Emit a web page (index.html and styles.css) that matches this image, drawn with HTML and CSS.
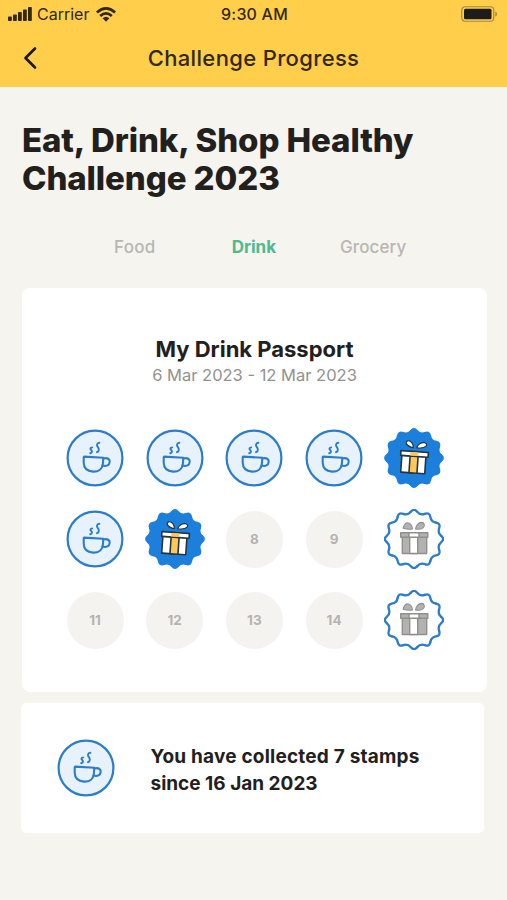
FILE: index.html
```html
<!DOCTYPE html>
<html lang="en">
<head>
<meta charset="utf-8">
<title>Challenge Progress</title>
<link rel="stylesheet" href="styles.css">
</head>
<body>
<svg class="sprite" aria-hidden="true">
  <defs>
    <symbol id="cup" viewBox="0 0 60 60">
      <circle cx="30" cy="30" r="27.400" fill="#e7f2fd" stroke="#2b7dcb" stroke-width="2.200"/>
      <g fill="none" stroke="#2b7dcb" stroke-width="2.100" stroke-linecap="round" stroke-linejoin="round">
        <path d="M19.200 28.600L38.300 29.700L37.900 35.500C37.300 41.500 33 43.900 28 43.600C22 43.200 18.800 39.500 18.700 34.500L18.700 29.200Q18.700 28.600 19.200 28.600Z"/>
        <path d="M38.300 30.500C42.500 29.300 45 31.200 44.700 34C44.400 37.200 41.500 38.700 37.600 37.600"/>
        <path stroke-width="1.900" d="M27.200 19.400C24.700 19.800 25.300 21.200 26.300 22.200C27.300 23.400 27.200 24.900 25.200 25.300M34.400 14.800C31.200 15 31.700 17.700 32.900 19.200C34.300 21 34.200 23.800 31.900 24.200"/>
      </g>
    </symbol>
    <path id="wave" d="M-3.150-27.240Q0-31 3.150-27.240Q6.290-23.470 10.890-25.170"/>
    <path id="wedge" d="M-3.150-27.240Q0-31 3.150-27.240Q6.290-23.470 10.890-25.170L0 0Z"/>
    <g id="waves3"><use href="#wave"/><use href="#wave" transform="rotate(30)"/><use href="#wave" transform="rotate(60)"/></g>
    <g id="waves"><use href="#waves3"/><use href="#waves3" transform="rotate(90)"/><use href="#waves3" transform="rotate(180)"/><use href="#waves3" transform="rotate(270)"/></g>
    <g id="wedges3"><use href="#wedge"/><use href="#wedge" transform="rotate(30)"/><use href="#wedge" transform="rotate(60)"/></g>
    <g id="wedges"><use href="#wedges3"/><use href="#wedges3" transform="rotate(90)"/><use href="#wedges3" transform="rotate(180)"/><use href="#wedges3" transform="rotate(270)"/></g>
    <symbol id="gift-on" viewBox="0 0 60 60">
      <g transform="translate(30 30)" fill="#1c7fdc" stroke="#1c7fdc" stroke-width="1.600" stroke-linejoin="round"><use href="#wedges"/></g>
      <g transform="rotate(4 30 30)" stroke="#24343f" stroke-width="1.600" stroke-linejoin="round">
        <path fill="#fff" d="M17.700 28H41.800V45H17.700Z"/>
        <path fill="#fdc858" d="M26 28H34V45H26Z"/>
        <path fill="#fff" d="M16.500 23.500H44V28.300H16.500Z"/>
        <path fill="#fdc858" stroke="none" d="M26 24.200H34V27.800H26Z"/>
        <path fill="#fff" stroke-width="1.200" d="M28.600 19.800C28.800 16 25.500 12.500 22.600 13.300C19.800 14.200 20.600 18.600 28.600 19.800ZM32 19.600C32.700 16.500 36 13.600 39.600 14C43.500 14.700 42.500 20.300 32 19.600Z"/>
      </g>
    </symbol>
    <symbol id="gift-off" viewBox="0 0 60 60">
      <g transform="translate(30 30)" fill="none" stroke="#2b7dcb" stroke-width="2.300" stroke-linecap="round"><use href="#waves"/></g>
      <g stroke="#8f8f8f" stroke-width="1.400" stroke-linejoin="round" fill="#b3b2b0">
        <path d="M18.300 28H42.700V44.500H18.300Z"/>
        <path fill="#fff" d="M25.700 28H33.700V44.500H25.700Z"/>
        <path d="M16.700 23.700H43.800V28.200H16.700Z"/>
        <path fill="#fff" d="M25 23.700H35V28.200H25Z"/>
        <path stroke-width="1.100" d="M28.500 20C28.500 16 25 13 22.500 14C20.500 15 19.500 17.500 19.200 19.300Q24 20.800 28.500 20ZM31.500 20C32 16.500 34.500 13.500 37.500 13.400C40.500 13.500 41 16.500 39.500 18.500C38 20.300 35 20.500 31.500 20Z"/>
      </g>
    </symbol>
  </defs>
</svg>
<header class="header">
  <div class="status">
    <div class="carrier">
      <svg class="signal" viewBox="0 0 24 14"><rect y="9.500" width="3.800" height="4.500" rx=".8"/><rect x="5" y="7.500" width="3.800" height="6.500" rx=".8"/><rect x="10" y="5" width="3.800" height="9" rx=".8"/><rect x="15" y="2.500" width="3.800" height="11.500" rx=".8"/><rect x="20" width="3.800" height="14" rx=".8"/></svg>
      <span>Carrier</span>
      <svg class="wifi" viewBox="0 0 20 15"><g fill="none" stroke="#30280f" stroke-width="2.700"><path d="M.900 5.500Q10-2.600 19.100 5.500"/><path d="M4.200 9Q10 3.900 15.800 9"/></g><path d="M6.600 11.300Q10 8.300 13.400 11.300L10 14.800Z" fill="#30280f"/></svg>
    </div>
    <span class="time">9:30 AM</span>
    <svg class="battery" viewBox="0 0 37 16"><rect x=".75" y=".75" width="32" height="14.500" rx="3.500" fill="none" stroke="#a68b3d" stroke-width="1.200"/><rect x="3" y="2.800" width="27.500" height="10.400" rx="1.500" fill="#1d1c1a"/><path d="M34.300 5.200Q38 8 34.300 10.800Z" fill="#a68b3d"/></svg>
  </div>
  <div class="nav">
    <svg class="back" viewBox="0 0 14 24"><path d="M12 2.500L2.500 12L12 21.500" fill="none" stroke="#181611" stroke-width="2.600" stroke-linecap="round" stroke-linejoin="round"/></svg>
    <span class="nav-title">Challenge Progress</span>
  </div>
</header>
<main>
  <h1>Eat, Drink, Shop Healthy<br>Challenge 2023</h1>
  <nav class="tabs"><span class="food">Food</span><span class="active">Drink</span><span class="grocery">Grocery</span></nav>
  <section class="card passport">
    <h2>My Drink Passport</h2>
    <p class="dates">6 Mar 2023 - 12 Mar 2023</p>
    <div class="grid">
      <svg><use href="#cup"/></svg><svg><use href="#cup"/></svg><svg><use href="#cup"/></svg><svg><use href="#cup"/></svg><svg><use href="#gift-on"/></svg>
      <svg><use href="#cup"/></svg><svg><use href="#gift-on"/></svg><span class="slot">8</span><span class="slot">9</span><svg><use href="#gift-off"/></svg>
      <span class="slot">11</span><span class="slot">12</span><span class="slot">13</span><span class="slot">14</span><svg><use href="#gift-off"/></svg>
    </div>
  </section>
  <section class="card summary">
    <svg><use href="#cup"/></svg>
    <p><span class="s1">You have collected 7 stamps</span><br><span class="s2">since 16 Jan 2023</span></p>
  </section>
</main>
</body>
</html>
```
FILE: styles.css
```css
* { box-sizing: border-box; margin: 0; padding: 0; }
body { width: 507px; height: 900px; overflow: hidden; background: #f5f4ef; font-family: Inter, "Liberation Sans", sans-serif; color: #22201d; }
svg { display: block; flex: none; }
.sprite { position: absolute; width: 0; height: 0; }
span { white-space: nowrap; }
.header { height: 87px; background: #ffce4a; color: #30280f; }
.status { height: 28px; display: grid; grid-template-columns: 1fr auto 1fr; align-items: center; padding: 0 9px 0 8px; }
.carrier { display: flex; align-items: center; font-size: 16px; letter-spacing: 0; }
.signal { width: 24px; height: 14px; margin-right: 5px; fill: #30280f; }
.wifi { width: 20px; height: 15px; margin-left: 7px; }
.time { font-size: 16px; font-weight: 500; letter-spacing: .2px; padding-left: 3px; }
.battery { width: 37px; height: 16px; justify-self: end; }
.nav { height: 59px; display: grid; grid-template-columns: 1fr auto 1fr; align-items: center; padding-left: 23px; padding-right: 23px; }
.back { width: 14px; height: 24px; }
.nav-title { font-size: 22px; font-weight: 500; letter-spacing: .35px; }
main { padding: 34px 20px 0 22px; }
h1 { font-size: 33px; line-height: 38px; font-weight: 800; letter-spacing: -.1px; }
.tabs { display: flex; margin-top: 38px; height: 24px; line-height: 24px; font-size: 17px; color: #b8b6b3; font-weight: 500; padding-left: 92px; letter-spacing: .3px; }
.tabs .active { color: #4fba8f; font-weight: 700; margin-left: 76px; letter-spacing: 0; }
.tabs .grocery { margin-left: 64px; letter-spacing: .1px; }
.card { background: #fff; }
.passport { height: 404px; margin-top: 29px; border-radius: 8px; padding-top: 46px; text-align: center; }
h2 { font-size: 22px; line-height: 30px; font-weight: 700; }
.dates { font-size: 16.500px; line-height: 22px; color: #93918e; }
.grid { display: grid; grid-template-columns: repeat(5, 60px); column-gap: 19.700px; row-gap: 21px; margin: 42px 0 0 43px; }
.grid svg, .summary svg { width: 60px; height: 60px; }
.slot { width: 57px; height: 57px; margin: 1.500px; border-radius: 50%; background: #f5f3f0; color: #b5b3af; font-size: 13.500px; font-weight: 700; display: flex; align-items: center; justify-content: center; }
.summary { width: 463px; height: 130px; margin: 11px 0 0 -1px; border-radius: 5px; display: flex; align-items: center; padding-left: 34.500px; }
.summary p { margin-left: 35px; padding-top: 3px; font-size: 19px; line-height: 27px; font-weight: 700; }
.s1 { letter-spacing: .2px; }
```
